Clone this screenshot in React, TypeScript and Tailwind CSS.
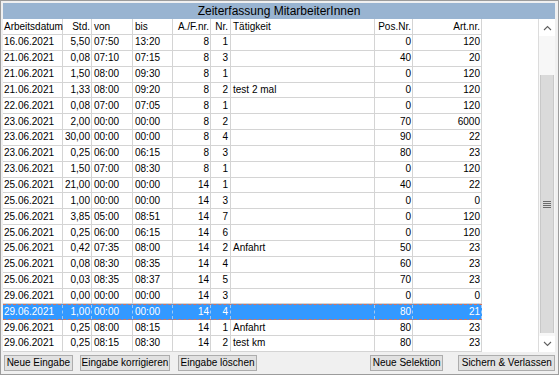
import React from "react";

type Col = { label: string; cls: string };

const cols: Col[] = [
  { label: "Arbeitsdatum", cls: "w-[60px] pl-[1px] text-left" },
  { label: "Std.", cls: "w-[29px] pr-[1px] text-right" },
  { label: "von", cls: "w-[41px] pl-[2px] text-left" },
  { label: "bis", cls: "w-[40px] pl-[2px] text-left" },
  { label: "A./F.nr.", cls: "w-[38px] pr-[1px] text-right" },
  { label: "Nr.", cls: "w-[20px] pr-[2px] text-right" },
  { label: "Tätigkeit", cls: "w-[144px] pl-[2px] text-left" },
  { label: "Pos.Nr.", cls: "w-[38px] pr-[1px] text-right" },
  { label: "Art.nr.", cls: "w-[69px] pr-[1px] text-right" },
];

const rows: string[][] = [
  ["16.06.2021", "5,50", "07:50", "13:20", "8", "1", "", "0", "120"],
  ["21.06.2021", "0,08", "07:10", "07:15", "8", "3", "", "40", "20"],
  ["21.06.2021", "1,50", "08:00", "09:30", "8", "1", "", "0", "120"],
  ["21.06.2021", "1,33", "08:00", "09:20", "8", "2", "test 2 mal", "0", "120"],
  ["22.06.2021", "0,08", "07:00", "07:05", "8", "1", "", "0", "120"],
  ["23.06.2021", "2,00", "00:00", "00:00", "8", "2", "", "70", "6000"],
  ["23.06.2021", "30,00", "00:00", "00:00", "8", "4", "", "90", "22"],
  ["23.06.2021", "0,25", "06:00", "06:15", "8", "3", "", "80", "23"],
  ["23.06.2021", "1,50", "07:00", "08:30", "8", "1", "", "0", "120"],
  ["25.06.2021", "21,00", "00:00", "00:00", "14", "1", "", "40", "22"],
  ["25.06.2021", "1,00", "00:00", "00:00", "14", "3", "", "0", "0"],
  ["25.06.2021", "3,85", "05:00", "08:51", "14", "7", "", "0", "120"],
  ["25.06.2021", "0,25", "06:00", "06:15", "14", "6", "", "0", "120"],
  ["25.06.2021", "0,42", "07:35", "08:00", "14", "2", "Anfahrt", "50", "23"],
  ["25.06.2021", "0,08", "08:30", "08:35", "14", "4", "", "60", "23"],
  ["25.06.2021", "0,03", "08:35", "08:37", "14", "5", "", "70", "23"],
  ["29.06.2021", "0,00", "00:00", "00:00", "14", "3", "", "0", "0"],
  ["29.06.2021", "1,00", "00:00", "00:00", "14", "4", "", "80", "21"],
  ["29.06.2021", "0,25", "08:00", "08:15", "14", "1", "Anfahrt", "80", "23"],
  ["29.06.2021", "0,25", "08:15", "08:30", "14", "2", "test km", "80", "23"],
];

const SELECTED = 17;

function Chevron({ up }: { up?: boolean }) {
  return (
    <svg width="9" height="6" viewBox="0 0 9 6">
      <polyline
        points={up ? "1,5 4.5,1.5 8,5" : "1,1 4.5,4.5 8,1"}
        fill="none"
        stroke="#606060"
        strokeWidth="1.1"
      />
    </svg>
  );
}

function Btn({ label, cls }: { label: string; cls: string }) {
  return (
    <button
      className={`h-[16px] bg-[#e1e1e1] border border-[#adadad] text-[10px] leading-none text-black flex items-center justify-center ${cls}`}
    >
      {label}
    </button>
  );
}

export default function App() {
  return (
    <div
      className="w-[559px] h-[375px] bg-[#f0f0f0] border border-[#9c9c9c] pl-[2px] pt-[2px] pr-[3px] flex flex-col overflow-hidden"
      style={{ fontFamily: '"Liberation Sans", Arial, sans-serif' }}
    >
      <div className="h-[16px] bg-[#99b4d1] flex items-center justify-center text-[12px] leading-none text-black">
        Zeiterfassung MitarbeiterInnen
      </div>

      <div className="h-[333px] flex bg-white">
        <div className="w-[535px] flex flex-col text-[10px] leading-none text-black">
          <div className="h-[16px] flex">
            {cols.map((c, i) => (
              <div
                key={i}
                className={`${c.cls} h-full border-r border-b border-[#d4d4d4] flex items-center whitespace-nowrap`}
              >
                <span className="w-full">{c.label}</span>
              </div>
            ))}
          </div>
          {rows.map((r, ri) => {
            const sel = ri === SELECTED;
            return (
              <div
                key={ri}
                className={
                  sel
                    ? "h-[15.85px] flex w-[479px] bg-[#3399ff] text-white border-y border-dashed border-[#d9735a]"
                    : "h-[15.85px] flex w-[479px]"
                }
              >
                {r.map((v, ci) => (
                  <div
                    key={ci}
                    className={
                      sel
                        ? `${cols[ci].cls} h-full border-r border-dashed border-[#9fc8f5] flex items-center whitespace-nowrap`
                        : `${cols[ci].cls} h-full border-r border-b border-[#d4d4d4] flex items-center whitespace-nowrap`
                    }
                  >
                    <span className="w-full">{v}</span>
                  </div>
                ))}
              </div>
            );
          })}
        </div>

        <div className="w-[17px] flex flex-col bg-[#f7f7f7] border-l border-[#dcdcdc]">
          <div className="h-[17px] flex items-center justify-center bg-white">
            <Chevron up />
          </div>
          <div className="h-[39px]" />
          <div className="h-[258px] mx-[1px] bg-[#dadada] border-x border-[#c8c8c8] flex items-center justify-center">
            <div className="flex flex-col gap-[1px]">
              <div className="w-[8px] h-[1px] bg-[#6a6a6a]" />
              <div className="w-[8px] h-[1px] bg-[#6a6a6a]" />
              <div className="w-[8px] h-[1px] bg-[#6a6a6a]" />
              <div className="w-[8px] h-[1px] bg-[#6a6a6a]" />
            </div>
          </div>
          <div className="flex-1" />
          <div className="h-[16px] flex items-center justify-center bg-white">
            <Chevron />
          </div>
        </div>
      </div>

      <div className="mt-[3px] flex">
        <Btn label="Neue Eingabe" cls="w-[69px] ml-[1px]" />
        <Btn label="Eingabe korrigieren" cls="w-[91px] ml-[7px]" />
        <Btn label="Eingabe löschen" cls="w-[79px] ml-[8px]" />
        <Btn label="Neue Selektion" cls="w-[74px] ml-[113px]" />
        <Btn label="Sichern & Verlassen" cls="w-[97px] ml-[15px]" />
      </div>
    </div>
  );
}
